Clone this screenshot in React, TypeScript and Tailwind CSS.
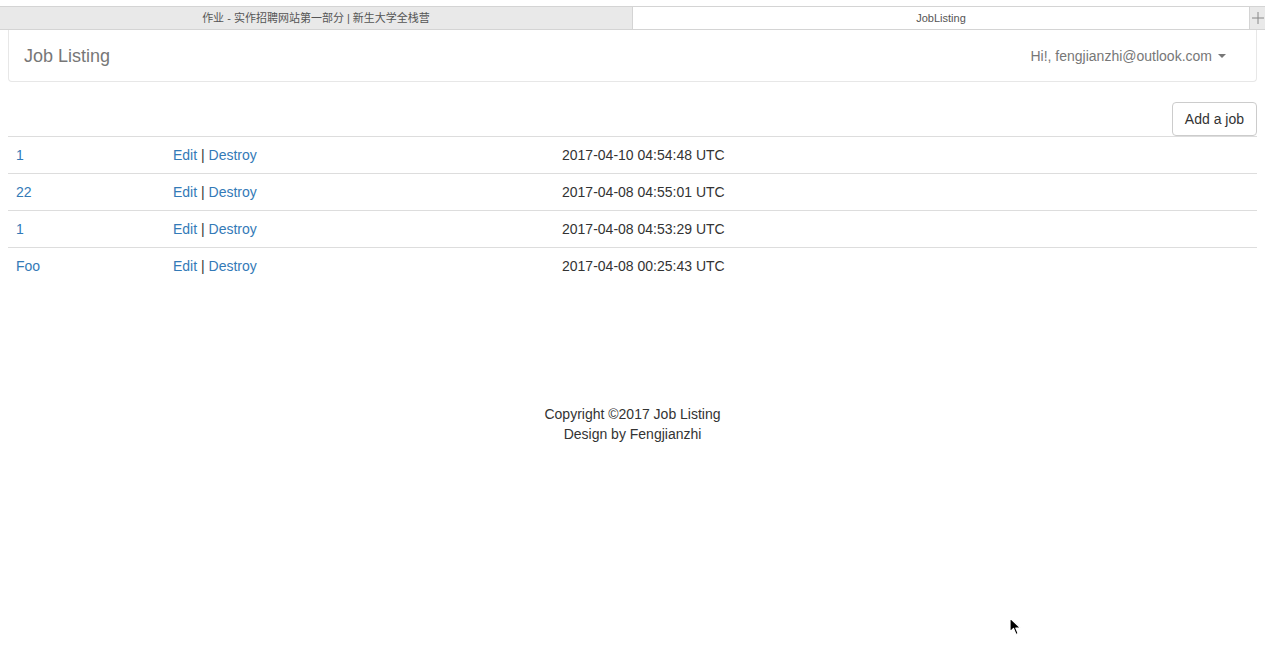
const jobs = [
  { title: '1', createdAt: '2017-04-10 04:54:48 UTC' },
  { title: '22', createdAt: '2017-04-08 04:55:01 UTC' },
  { title: '1', createdAt: '2017-04-08 04:53:29 UTC' },
  { title: 'Foo', createdAt: '2017-04-08 00:25:43 UTC' },
];

function TabBar() {
  return (
    <div className="pt-[6px] bg-white">
      <div className="flex h-[24px] border-t border-b border-[#d4d4d4] text-[11px] text-[#555] font-['Liberation_Sans','Noto_Sans_CJK_SC',sans-serif]">
        <div className="w-[633px] flex items-center justify-center bg-[#e9e9e9] border-r border-[#d4d4d4]">
          作业 - 实作招聘网站第一部分 | 新生大学全栈营
        </div>
        <div className="flex-1 flex items-center justify-center bg-white">JobListing</div>
        <div className="w-[16px] flex items-center justify-center bg-[#e9e9e9] border-l border-[#d4d4d4]">
          <svg width="12" height="12" viewBox="0 0 12 12">
            <path d="M6 0v12M0 6h12" stroke="#888" strokeWidth="1" />
          </svg>
        </div>
      </div>
    </div>
  );
}

function Navbar() {
  return (
    <nav className="mx-[8px] h-[52px] flex items-center justify-between pl-[16px] pr-[16px] border border-t-0 border-[#e7e7e7] rounded-b-[4px] bg-white text-[#777]">
      <a className="text-[18px] leading-[20px] -ml-[1px]">Job Listing</a>
      <div className="flex items-center gap-[6px] text-[14px] mr-[14px]">
        <span>Hi!, fengjianzhi@outlook.com</span>
        <span className="w-0 h-0 border-l-[4px] border-r-[4px] border-t-[4px] border-l-transparent border-r-transparent border-t-[#777] mt-[1px]" />
      </div>
    </nav>
  );
}

function Cursor() {
  return (
    <svg className="absolute left-[1009px] top-[617px]" width="14" height="20" viewBox="0 0 14 20">
      <path d="M1 1 L1 15 L4.5 11.5 L7 17.5 L9.2 16.5 L6.8 11 L11.5 11 Z" fill="#000" stroke="#fff" strokeWidth="1.2" strokeLinejoin="round" />
    </svg>
  );
}

export default function App() {
  return (
    <div className="relative w-[1265px] h-[657px] overflow-hidden bg-white text-[#333] text-[14px] leading-[20px] font-['Liberation_Sans',Arial,sans-serif]">
      <TabBar />
      <Navbar />
      <div className="mx-[8px] mt-[20px]">
        <div className="flex justify-end">
          <button className="h-[34px] px-[12px] border border-[#ccc] rounded-[4px] bg-white text-[#333] text-[14px]">
            Add a job
          </button>
        </div>
        <table className="w-full border-collapse">
          <tbody>
            {jobs.map((job, i) => (
              <tr key={i} className="border-t border-[#ddd]">
                <td className="w-[157px] p-[8px] text-[#337ab7]">{job.title}</td>
                <td className="w-[389px] p-[8px]">
                  <a className="text-[#337ab7]">Edit</a> | <a className="text-[#337ab7]">Destroy</a>
                </td>
                <td className="p-[8px]">{job.createdAt}</td>
              </tr>
            ))}
          </tbody>
        </table>
      </div>
      <footer className="mt-[120px] text-center">
        <p>Copyright ©2017 Job Listing</p>
        <p>Design by Fengjianzhi</p>
      </footer>
      <Cursor />
    </div>
  );
}
